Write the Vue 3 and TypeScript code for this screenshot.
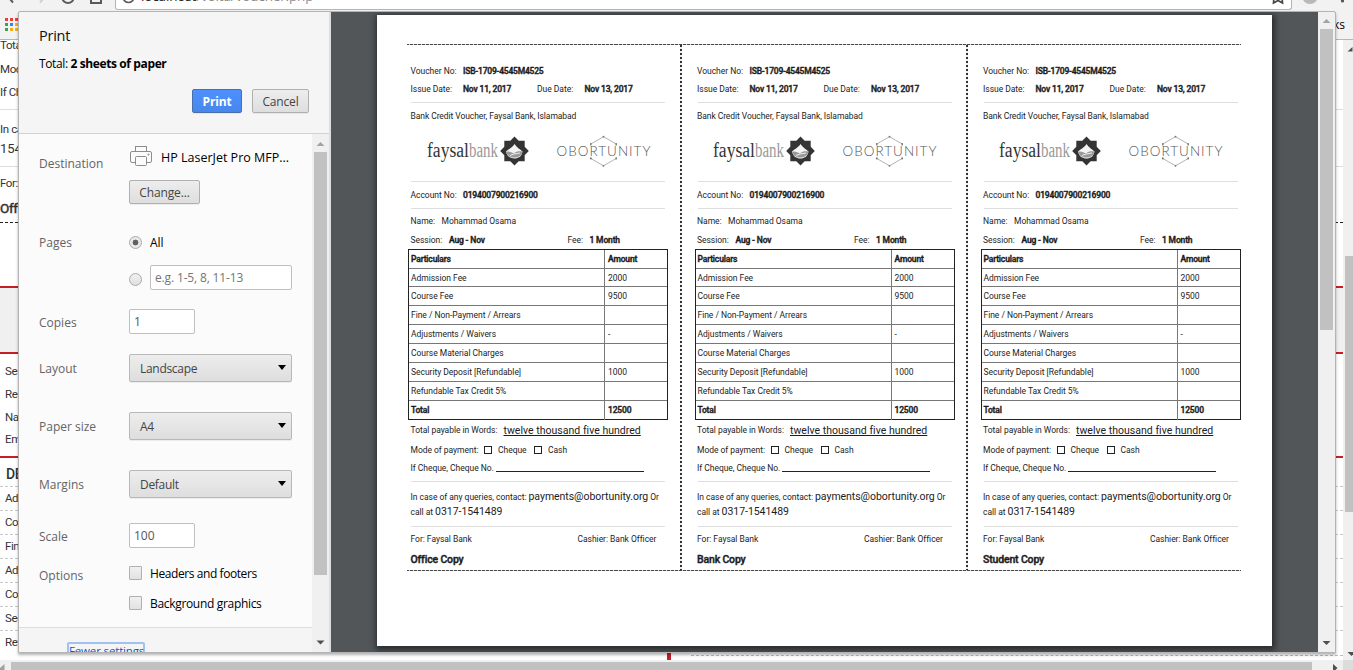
<script setup lang="ts">
interface FeeRow {
  name: string
  amount: string
  strong?: boolean
}

const copies: string[] = ['Office Copy', 'Bank Copy', 'Student Copy']

const fees: FeeRow[] = [
  { name: 'Particulars', amount: 'Amount', strong: true },
  { name: 'Admission Fee', amount: '2000' },
  { name: 'Course Fee', amount: '9500' },
  { name: 'Fine / Non-Payment / Arrears', amount: '' },
  { name: 'Adjustments / Waivers', amount: '-' },
  { name: 'Course Material Charges', amount: '' },
  { name: 'Security Deposit [Refundable]', amount: '1000' },
  { name: 'Refundable Tax Credit 5%', amount: '' },
  { name: 'Total', amount: '12500', strong: true },
]

const details: string[] = ['Ses', 'Reg', 'Na', 'Em']
const charges: string[] = ['Ad', 'Co', 'Fin', 'Adj', 'Co', 'Sec', 'Ref']
</script>

<template>
  <div class="screen">
    <!-- Browser window behind the dialog -->
    <div class="browser">
      <div class="toolbar">
        <svg class="nav" width="115" height="10" viewBox="0 0 115 10">
          <path d="M7.500 -4l5.500 6.500" fill="none" stroke="#5a5a5a" stroke-width="2" />
          <path d="M40 2.500l5-6" fill="none" stroke="#d0d0d0" stroke-width="2" />
          <path d="M62.500 -2a5.500 5 0 0 0 11 0" fill="none" stroke="#5a5a5a" stroke-width="2" />
          <path d="M91 -3V3h10V-3" fill="none" stroke="#5a5a5a" stroke-width="2" />
        </svg>
        <div class="omnibox">
          <svg width="22" height="9" viewBox="0 0 22 9">
            <circle cx="12.500" cy="-3" r="5.500" fill="none" stroke="#5a5a5a" stroke-width="1.600" />
          </svg>
          <span class="url"><b>localhost</b>/volta/voucher.php</span>
          <svg class="star" width="14" height="9" viewBox="0 0 14 9">
            <path d="M3 -3L2.500 3 7 .5 11.500 3 11 -3" fill="none" stroke="#444" stroke-width="1.700" />
          </svg>
        </div>
        <svg width="61" height="10" viewBox="0 0 61 10">
          <circle cx="18" cy="-4" r="8" fill="#b9b9b9" />
          <circle cx="50.500" cy="1" r="1.600" fill="#555" />
        </svg>
      </div>
      <div class="bookmarks">
        <div class="apps">
          <i class="r"></i><i class="r"></i><i class="r"></i>
          <i class="g"></i><i class="b"></i><i class="y"></i>
          <i class="g"></i><i class="y"></i><i class="y"></i>
        </div>
        <span>ks</span>
      </div>
      <div class="viewport">
        <div class="web">
          <p class="w-total">Tota</p>
          <p class="w-mode">Moc</p>
          <p class="w-mode">If Ch</p>
          <hr class="thin" />
          <p class="w-case">In ca</p>
          <p class="w-phone">154</p>
          <hr class="thin second" />
          <p class="w-for">For:</p>
          <p class="w-copy">Offi</p>
          <div class="cut"></div>
          <div class="banner"></div>
          <div class="detail">
            <p v-for="d in details" :key="d">{{ d }}</p>
          </div>
          <h3>DE</h3>
          <p v-for="(c, i) in charges" :key="i" class="charge">{{ c }}</p>
          <div class="page-end"><span class="red-post"></span><span class="end-dash"></span></div>
        </div>
        <div class="v-scroll">
          <svg width="10" height="20" viewBox="0 0 10 20"><path d="M4.500 11.500l5-4.500v4.500z" fill="#505050" /></svg>
          <div class="v-thumb"></div>
          <svg width="10" height="9" viewBox="0 0 10 9"><path d="M4.500 1h8l-4 4z" fill="#505050" /></svg>
        </div>
      </div>
      <div class="h-scroll">
        <svg width="11" height="10" viewBox="0 0 11 10"><path d="M0 8L4.500 4v6H0z" fill="#a0a0a0" /></svg>
        <div class="h-thumb"></div>
        <svg width="31" height="10" viewBox="0 0 31 10"><path d="M21 4l4.500 4-2 2H21z" fill="#505050" /></svg>
        <div class="corner"></div>
      </div>
    </div>

    <!-- Print dialog -->
    <div class="dialog">
      <aside class="settings">
        <header>
          <h1>Print</h1>
          <p class="sheets">Total: <b>2 sheets of paper</b></p>
          <div class="actions">
            <button class="btn primary">Print</button>
            <button class="btn cancel">Cancel</button>
          </div>
        </header>
        <div class="options">
          <div class="form">
            <div class="row dest">
              <label>Destination</label>
              <div class="field">
                <svg width="22" height="22" viewBox="0 0 22 22" fill="#fbfbfb" stroke="#8c8c8c">
                  <rect x=".5" y="5.500" width="21" height="11" rx="1.500" />
                  <rect x="5.500" y=".5" width="11" height="5" />
                  <rect x="5.500" y="10.500" width="11" height="9" rx="1" />
                  <circle cx="18.500" cy="8.500" r=".6" />
                </svg>
                <span class="printer">HP LaserJet Pro MFP...</span>
              </div>
            </div>
            <div class="row change"><label></label><button class="btn">Change...</button></div>
            <div class="row pages">
              <label>Pages</label>
              <div class="field"><span class="radio on"></span><span class="choice">All</span></div>
            </div>
            <div class="row range">
              <label></label>
              <div class="field"><span class="radio low"></span><span class="box wide">e.g. 1-5, 8, 11-13</span></div>
            </div>
            <div class="row copies"><label>Copies</label><span class="box">1</span></div>
            <div class="row layout">
              <label>Layout</label>
              <div class="select"><span>Landscape</span><i></i></div>
            </div>
            <div class="row size">
              <label>Paper size</label>
              <div class="select"><span>A4</span><i></i></div>
            </div>
            <div class="row size">
              <label>Margins</label>
              <div class="select"><span>Default</span><i></i></div>
            </div>
            <div class="row scale"><label>Scale</label><span class="box">100</span></div>
            <div class="row check">
              <label class="opt">Options</label>
              <div class="field"><span class="checkbox"></span><span class="choice heads">Headers and footers</span></div>
            </div>
            <div class="row check next">
              <label></label>
              <div class="field"><span class="checkbox"></span><span class="choice graphics">Background graphics</span></div>
            </div>
            <div class="more"><a>Fewer settings</a></div>
          </div>
          <div class="bar">
            <svg width="17" height="18" viewBox="0 0 17 18"><path d="M4.500 12l4-4 4 4z" fill="#a3a3a3" /></svg>
            <div class="thumb form-thumb"></div>
            <svg width="17" height="18" viewBox="0 0 17 18"><path d="M4.500 6.500l4 4 4-4z" fill="#505050" /></svg>
          </div>
        </div>
      </aside>
      <section class="preview">
        <div class="sheet">
          <div class="vouchers">
            <article v-for="copy in copies" :key="copy" class="voucher">
              <div class="line"><span class="k1">Voucher No:</span><b class="num">ISB-1709-4545M4525</b></div>
              <div class="line">
                <span class="k1">Issue Date:</span><b class="issue">Nov 11, 2017</b>
                <span class="k2">Due Date:</span><b>Nov 13, 2017</b>
              </div>
              <hr class="h1" />
              <div class="line tall"><span class="branch">Bank Credit Voucher, Faysal Bank, Islamabad</span></div>
              <div class="logos">
                <svg width="104" height="32" viewBox="0 0 104 32">
                  <text x="1" y="22" class="bank-dark" textLength="42" lengthAdjust="spacingAndGlyphs">faysal</text>
                  <text x="43" y="22" class="bank-light" textLength="29" lengthAdjust="spacingAndGlyphs">bank</text>
                  <path d="M88.500 1.500l4.200 4.200h6v6l4.100 4.300-4.100 4.200v6h-6l-4.200 4.200-4.200-4.200h-6v-6L74.200 16l4.100-4.300v-6h6z" fill="#343434" />
                  <path d="M80 16.500c2-2 6-3.500 8.500-7.500 2.500 4 6 5.500 8 7.500-1 5-4 7-8 7s-7.500-2-8.500-7z" fill="#f3f3f3" />
                  <path d="M80 17c4-1.500 6 2 8.500 1 2-2 5-2 8-1.500-1 4-4 6-8 6s-7-1.500-8.500-5.500z" fill="#999" />
                  <path d="M84 20.500l4-1.500 6-1" stroke="#eee" fill="none" />
                </svg>
                <svg class="obo" width="98" height="32" viewBox="0 0 98 32">
                  <path d="M35.800 9L48.500 1.700 61.200 9M35.800 23.500l12.700 7.300 12.700-7.300" fill="none" stroke="#a0a0a0" stroke-width=".8" />
                  <path d="M35.800 9v2M61.200 9v2M35.800 22v2M61.200 22v2" stroke="#a0a0a0" stroke-width=".8" />
                  <g fill="#777">
                    <circle cx="48.500" cy="1.700" r=".9" /><circle cx="35.800" cy="9" r=".9" /><circle cx="61.200" cy="9" r=".9" />
                    <circle cx="35.800" cy="23.500" r=".9" /><circle cx="61.200" cy="23.500" r=".9" /><circle cx="48.500" cy="30.800" r=".9" />
                  </g>
                  <text x="1.500" y="21" class="obo-text" textLength="94">OBORTUNITY</text>
                </svg>
              </div>
              <hr />
              <div class="line tall"><span class="k1">Account No:</span><b>0194007900216900</b></div>
              <hr />
              <div class="line name"><span class="k3">Name:</span><span class="person">Mohammad Osama</span></div>
              <div class="line session"><span class="k4">Session:</span><b class="term">Aug - Nov</b><span class="k5">Fee:</span><b>1 Month</b></div>
              <div class="table">
                <div v-for="fee in fees" :key="fee.name" class="tr" :class="{ strong: fee.strong }">
                  <span>{{ fee.name }}</span><span>{{ fee.amount }}</span>
                </div>
              </div>
              <div class="line words"><span class="k6">Total payable in Words:</span><u>twelve thousand five hundred</u></div>
              <div class="line mode">
                <span class="k7">Mode of payment:</span><i></i><span class="cheque">Cheque</span><i></i><span>Cash</span>
              </div>
              <div class="line"><span class="k8">If Cheque, Cheque No.</span><span class="blank"></span></div>
              <hr class="h2" />
              <div class="query">
                <div>In case of any queries, contact: <em class="mail">payments@obortunity.org</em> <span class="or">Or</span></div>
                <div>call at <em>0317-1541489</em></div>
              </div>
              <hr class="h3" />
              <div class="line sign"><span>For: Faysal Bank</span><span>Cashier: Bank Officer</span></div>
              <div class="copy">{{ copy }}</div>
            </article>
          </div>
        </div>
        <div class="bar pdf-bar">
          <svg width="17" height="17" viewBox="0 0 17 17"><path d="M4.500 11l4-4 4 4z" fill="#a3a3a3" /></svg>
          <div class="thumb pdf-thumb"></div>
          <svg width="17" height="18" viewBox="0 0 17 18"><path d="M4.500 7l4 4 4-4z" fill="#505050" /></svg>
        </div>
      </section>
    </div>
  </div>
</template>

<style>
body {
  margin: 0;
  overflow: hidden;
}
</style>

<style scoped>
* {
  box-sizing: border-box;
}
p,
h1,
h3,
hr {
  margin: 0;
}
svg {
  display: block;
  flex: none;
}
.screen {
  position: relative;
  width: 1353px;
  height: 670px;
  overflow: hidden;
  background: #fff;
  font-family: 'Open Sans', 'Noto Sans', sans-serif;
}
.browser {
  height: 670px;
  display: flex;
  flex-direction: column;
}
.toolbar {
  display: flex;
  height: 10px;
  background: #f2f2f2;
  overflow: hidden;
}
.omnibox {
  display: flex;
  width: 1177px;
  height: 10px;
  background: #fff;
  border: 1px solid #b4b4b4;
  border-top: 0;
  border-radius: 0 0 3px 3px;
  overflow: hidden;
}
.url {
  margin: -13px 0 0 3px;
  font-size: 13.500px;
  line-height: 18px;
  letter-spacing: -0.15px;
  color: #8a8a8a;
}
.url b {
  font-weight: 400;
  color: #222;
}
.star {
  margin-left: auto;
  margin-right: 6px;
}
.bookmarks {
  display: flex;
  align-items: center;
  justify-content: space-between;
  height: 30px;
  padding: 0 8px 0 5px;
  background: #f2f2f2;
  border-bottom: 1px solid #b6b6b6;
  font-size: 12px;
}
.apps {
  display: grid;
  grid-template-columns: repeat(3, 3px);
  gap: 2px;
}
.apps i {
  height: 3px;
}
.r { background: #ef3e36; }
.g { background: #31a455; }
.b { background: #2b8cf0; }
.y { background: #f9ae10; }
.viewport {
  display: flex;
  height: 620px;
}
.web {
  width: 1343px;
  overflow: hidden;
  font: 11.500px 'Roboto', sans-serif;
  letter-spacing: -0.4px;
  color: #333;
  background: #fff;
}
.w-total { height: 16px; line-height: 10px; }
.w-mode { height: 23px; line-height: 27px; }
.thin {
  border: 0;
  height: 1px;
  margin-top: 7px;
  background: #ddd;
}
.w-case { height: 24px; margin-top: 6px; line-height: 27px; }
.w-phone { height: 14px; line-height: 17px; font-size: 13px; letter-spacing: 0; }
.thin.second { margin-top: 12px; }
.w-for { margin-top: 6px; height: 20px; line-height: 20px; }
.w-copy { height: 29px; line-height: 31px; font-size: 13.500px; -webkit-text-stroke: 0.5px #333; }
.cut { border-top: 1px dashed #222; }
.banner {
  margin-top: 63px;
  height: 68px;
  background: #f0f0f0;
  border: solid #c31f26;
  border-width: 2px 0;
}
.detail {
  height: 102px;
  padding: 6px 0 0 5px;
}
.detail p { height: 22.800px; line-height: 22px; }
h3 {
  height: 30px;
  padding: 3px 0 0 6px;
  border-top: 2px solid #c31f26;
  font-size: 14px;
  line-height: 26px;
  font-weight: 500;
}
.charge {
  height: 24px;
  padding-left: 5px;
  line-height: 23px;
  border-top: 1px dashed #c8c8c8;
}
.page-end { display: flex; height: 10px; margin-top: -3px; }
.red-post { width: 4px; margin-left: 667px; background: #c31f26; }
.end-dash { flex: 1; margin: 4px 0 0 20px; border-top: 1px dashed #bbb; }
.v-scroll {
  display: flex;
  flex-direction: column;
  width: 10px;
  background: #f0f0f0;
}
.v-thumb {
  height: 256px;
  margin: 196px 0 139px 2px;
  background: #c1c1c1;
}
.h-scroll {
  display: flex;
  height: 10px;
  background: #f0f0f0;
}
.h-thumb {
  width: 1301px;
  margin-top: 2px;
  background: #c1c1c1;
}
.corner {
  width: 10px;
  background: #dcdcdc;
}
.dialog {
  position: absolute;
  left: 18px;
  top: 11px;
  width: 1318px;
  height: 642px;
  display: flex;
  border: 1px solid #b4b4b4;
  border-radius: 2px 2px 0 0;
  background: #f5f5f5;
  box-shadow: 0 2px 3px rgba(0, 0, 0, 0.3);
  overflow: hidden;
}
.settings {
  width: 312px;
  flex: none;
  border-right: 2px solid #dedede;
}
header {
  height: 122px;
  padding: 0 20px;
  border-bottom: 1px solid #d2d2d2;
}
h1 {
  padding-top: 14px;
  font-size: 14.500px;
  line-height: 20px;
  font-weight: 400;
  letter-spacing: -0.25px;
  color: #111;
}
.sheets {
  padding-top: 9px;
  font-size: 12px;
  line-height: 18px;
  letter-spacing: -0.38px;
  color: #000;
}
.actions {
  display: flex;
  justify-content: flex-end;
  gap: 10px;
  padding-top: 16px;
}
.btn {
  height: 24px;
  padding: 0;
  border: 1px solid #b0b0b0;
  border-radius: 2px;
  background: linear-gradient(#ededed, #dedede);
  box-shadow: 0 1px 0 rgba(0, 0, 0, 0.06);
  font: 12px 'Open Sans', sans-serif;
  letter-spacing: -0.15px;
  color: #444;
}
.btn.cancel { width: 57px; }
.btn.primary {
  width: 50px;
  background: linear-gradient(#4d90fe, #4787ed);
  border-color: #4b6fa8;
  color: #fff;
  font-weight: 700;
}
.options {
  display: flex;
  height: 518px;
  background: #fbfbfb;
}
.form {
  width: 293px;
  overflow: hidden;
}
.row {
  display: grid;
  grid-template-columns: 90px 1fr;
  align-items: center;
  padding: 0 20px;
  font-size: 12px;
  color: #000;
}
.row label { color: #646464; }
.field { display: flex; align-items: center; }
.dest { height: 46px; padding-right: 0; }
.dest label { margin-top: 12px; }
.dest svg { margin: -1px 0 0 1px; }
.printer { margin-left: 9px; font-size: 12.500px; white-space: nowrap; }
.change .btn { width: 71px; }
.pages { height: 28px; margin-top: 24px; }
.radio {
  width: 13px;
  height: 13px;
  border: 1px solid #aaa;
  border-radius: 50%;
  background: linear-gradient(#f0f0f0, #e0e0e0);
}
.radio.on { background: radial-gradient(circle, #606060 0 2.600px, #e9e9e9 3.200px); }
.radio.low { margin-top: 3px; }
.choice { margin-left: 8px; }
.range { height: 25px; margin-top: 9px; padding-right: 0; }
.box {
  width: 66px;
  height: 25px;
  padding-left: 4px;
  border: 1px solid #bfbfbf;
  border-radius: 2px;
  background: #fff;
  line-height: 24px;
  color: #555;
}
.box.wide { width: 142px; margin-left: 8px; letter-spacing: -0.15px; color: #757575; }
.copies { margin-top: 19px; }
.copies label,
.scale label { margin-top: 1px; }
.layout { margin-top: 20px; }
.select {
  display: flex;
  align-items: center;
  justify-content: space-between;
  width: 163px;
  height: 28px;
  padding: 0 5px 0 10px;
  border: 1px solid #b8b8b8;
  border-radius: 2px;
  background: linear-gradient(#ededed, #dedede);
  box-shadow: 0 1px 0 rgba(0, 0, 0, 0.06);
  letter-spacing: -0.3px;
  color: #444;
}
.select i {
  border: solid transparent;
  border-width: 5px 4.500px 0;
  border-top-color: #000;
  margin-top: -1px;
}
.size { margin-top: 30px; }
.scale { margin-top: 25px; }
.check { height: 20px; margin-top: 15px; padding-right: 0; }
.check.next { margin-top: 10px; }
.opt { margin-top: 4px; }
.heads { letter-spacing: -0.42px; }
.graphics { letter-spacing: -0.32px; }
.checkbox {
  width: 13px;
  height: 14px;
  margin-top: -1px;
  border: 1px solid #b0b0b0;
  border-radius: 1px;
  background: linear-gradient(#f0f0f0, #e2e2e2);
}
.more {
  height: 30px;
  margin-top: 14px;
  padding: 14px 0 0 48px;
  border-top: 1px solid #dcdcdc;
  background: #f5f5f5;
}
.more a {
  display: block;
  width: 78px;
  height: 20px;
  border: 2px solid #a1c1f5;
  border-radius: 2px;
  font-size: 11.500px;
  line-height: 13px;
  letter-spacing: -0.15px;
  white-space: nowrap;
  color: #1155cc;
}
.bar {
  display: flex;
  flex-direction: column;
  width: 17px;
  background: #f0f0f0;
}
.thumb {
  width: 13px;
  margin-left: 2px;
  background: #c1c1c1;
}
.form-thumb { height: 423px; margin-bottom: 59px; }
.preview {
  display: flex;
  flex: 1;
  background: #525659;
}
.sheet {
  width: 895px;
  height: 631px;
  margin: 3px 46px 0;
  padding: 29px 30px;
  background: #fff;
  box-shadow: 1px 2px 6px 2px rgba(0, 0, 0, 0.5);
}
.pdf-thumb { height: 302px; margin-bottom: 304px; }
.vouchers {
  width: 834px;
  height: 527px;
  display: grid;
  grid-template-columns: 275px 286px 273px;
  border: dashed #444;
  border-width: 1px 0;
  border-image: repeating-linear-gradient(90deg, #444 0 3px, #ddd 3px 4px) 1;
}
.voucher {
  padding: 17px 0 0 12.500px;
  background: repeating-linear-gradient(#333 0 2px, #eee 2px 4px) right / 2px 100% no-repeat;
  font: 8.500px 'Roboto', sans-serif;
  letter-spacing: -0.03px;
  color: #1c1c1c;
}
.voucher:first-child { padding-left: 1px; }
.voucher:last-child { background: none; }
.voucher b,
.strong,
.copy {
  font-weight: 500;
  letter-spacing: -0.16px;
  -webkit-text-stroke: 0.4px #1c1c1c;
}
.voucher .num { letter-spacing: -0.2px; }
.branch { letter-spacing: -0.07px; }
.line {
  display: flex;
  align-items: center;
  height: 18px;
  padding-left: 2.500px;
  white-space: nowrap;
}
.line > span,
.line > b { flex: none; }
.tall { height: 26px; }
.k1 { width: 52.500px; }
.issue { width: 74px; }
.k2 { width: 47.500px; }
.k3 { width: 31px; }
.k4 { width: 38.500px; }
.term { width: 118.500px; }
.k5 { width: 22px; }
.k6 { width: 93px; }
.k7 { width: 73.500px; }
.k8 { width: 85px; }
.voucher hr {
  width: 254px;
  height: 1px;
  margin-left: 3px;
  border: 0;
  background: #dfdfdf;
}
.voucher .h1 { margin-top: 4px; }
.logos { display: flex; height: 52px; padding: 6px 0 0 17.500px; }
.obo { margin-left: 25px; }
.bank-dark,
.bank-light {
  font: 20px 'Liberation Serif', serif;
  letter-spacing: 0;
  fill: #333;
}
.bank-light { fill: #999; }
.obo-text {
  font: 300 13.500px 'Lato', sans-serif;
  letter-spacing: 0;
  fill: #555;
}
.name { margin-top: 3px; }
.session { padding-top: 1px; }
.table {
  width: 260px;
  margin-top: 1px;
  border: solid #222;
  border-width: 1px 1px 0;
}
.tr {
  display: grid;
  grid-template-columns: 196px 1fr;
  height: 19px;
  line-height: 18.500px;
  border-bottom: 1px solid #777;
}
.tr:nth-child(2) { height: 18px; }
.tr:last-child { border-color: #222; }
.tr span { padding-left: 3px; }
.tr span:first-child { padding-left: 2px; border-right: 1px solid #777; }
.words { margin-top: 1px; }
.words u { font-size: 10.500px; letter-spacing: 0.02px; }
.mode { margin-top: 2px; }
.mode i {
  width: 8px;
  height: 8px;
  margin: -1px 6px 0 0;
  border: 1px solid #222;
}
.cheque { width: 36px; }
.blank {
  width: 148px;
  height: 8px;
  border-bottom: 1px solid #222;
}
.voucher .h2 { margin-top: 4px; }
.query {
  height: 44px;
  padding: 8px 0 0 2.500px;
  line-height: 14.500px;
  white-space: nowrap;
}
.query div { height: 14.500px; }
em { font-style: normal; font-size: 10.500px; letter-spacing: -0.04px; }
.sign { margin-top: 3px; }
.sign span:first-child { width: 167px; }
.copy {
  padding: 2px 0 0 2.500px;
  font-size: 10.500px;
  line-height: 19px;
}
</style>
